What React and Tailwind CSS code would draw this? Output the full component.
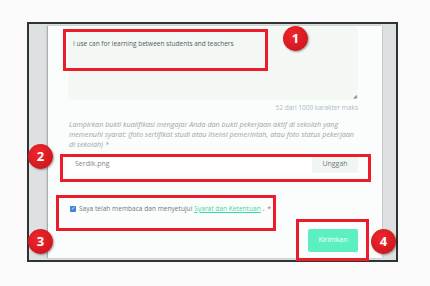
import React from "react";

function Badge({ n, className }) {
  return (
    <div
      className={`absolute w-[25px] h-[25px] rounded-full bg-[radial-gradient(circle_at_40%_35%,#f0262c,#c3121a)] shadow-[1px_1px_2px_rgba(0,0,0,0.35)] flex items-center justify-center text-white font-bold text-[13px] leading-none ${className}`}
    >
      {n}
    </div>
  );
}

function RedBox({ className }) {
  return <div className={`absolute border-[3px] border-[#ec1c2a] ${className}`} />;
}

export default function App() {
  return (
    <div
      className="relative w-[430px] h-[286px] bg-[#fafafa] overflow-hidden"
      style={{ fontFamily: '"Open Sans", "Liberation Sans", sans-serif' }}
    >
      <div className="absolute left-[27px] top-[22px] w-[371px] h-[240px] border-2 border-[#2f3333] bg-[#dde1e1] flex pt-[2px] pb-[2px]">
        <div className="w-[19px] shrink-0 border-r border-[#c5caca]" />
        <div className="flex-1 bg-[#fbfcfc] shadow-[-1px_0_2px_rgba(0,0,0,0.2)] pl-[20px] pr-[24px] pt-[1px]">
          <div className="relative h-[73px] bg-[#f3f8f5] rounded-sm">
            <p className="pl-[5px] pt-[12px] text-[6.5px] text-[#555d5d]">
              I use can for learning between students and teachers
            </p>
            <span className="absolute right-[1px] bottom-[1px] text-[5px] leading-none text-[#8a9090]">◢</span>
          </div>
          <p className="text-right text-[6.5px] text-[#a8bcc4] mt-[3px]">52 dari 1000 karakter maks</p>
          <p className="mt-[6px] pl-[1px] text-[7.2px] leading-[10px] italic text-[#9aa7a8]">
            Lampirkan bukti kualifikasi mengajar Anda dan bukti pekerjaan aktif di sekolah yang memenuhi syarat: (foto sertifikat studi atau lisensi pemerintah, atau foto status pekerjaan di sekolah) *
          </p>
          <div className="mt-[4px] h-[22px] flex items-center justify-between bg-white">
            <span className="pl-[7px] text-[7px] text-[#7d8888]">Serdik.png</span>
            <span className="h-[19px] w-[46px] flex items-center justify-center bg-[#f1f6f3] text-[7px] text-[#6f7a80]">
              Unggah
            </span>
          </div>
          <div className="mt-[29px] flex items-center pl-[2px] text-[6.6px] text-[#6d7b80]">
            <span className="w-[6px] h-[6px] rounded-[1px] bg-[#3b82dc] flex items-center justify-center text-white text-[5px] leading-none mr-[3px]">
              ✓
            </span>
            <span>Saya telah membaca dan menyetujui</span>
            <span className="ml-[2px] text-[#3bd9a2] underline">Syarat dan Ketentuan</span>
            <span className="ml-[2px]">.</span>
            <span className="ml-[3px] text-[#e04a6a]">*</span>
          </div>
          <div className="mt-[15px] flex justify-end">
            <div className="w-[50px] h-[23px] rounded-[2px] bg-[#5cefc2] flex items-center justify-center text-white text-[7px]">
              Kirimkan
            </div>
          </div>
        </div>
        <div className="w-[14px] shrink-0 border-l border-[#c5caca]" />
      </div>

      <RedBox className="left-[63px] top-[29px] w-[205px] h-[42px]" />
      <RedBox className="left-[60px] top-[154px] w-[311px] h-[28px]" />
      <RedBox className="left-[56px] top-[195px] w-[220px] h-[36px]" />
      <RedBox className="left-[296px] top-[219px] w-[73px] h-[42px]" />

      <Badge n="1" className="left-[283px] top-[26px]" />
      <Badge n="2" className="left-[28px] top-[144px]" />
      <Badge n="3" className="left-[28px] top-[229px]" />
      <Badge n="4" className="left-[371px] top-[229px]" />
    </div>
  );
}
